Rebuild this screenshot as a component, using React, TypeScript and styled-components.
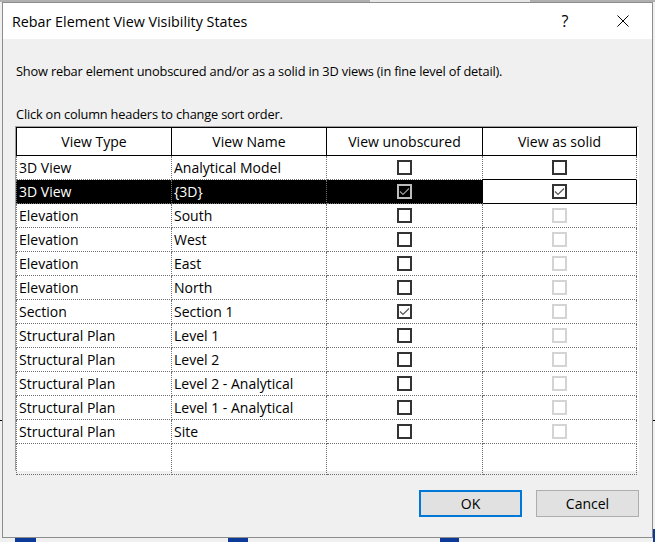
import styled, { createGlobalStyle } from 'styled-components'

const GlobalStyle = createGlobalStyle`
  html, body {
    margin: 0;
    padding: 0;
  }
  body {
    background: #f0f0f0;
    font-family: 'Open Sans', 'Noto Sans', sans-serif;
    color: #000;
  }
`

type ViewRow = {
  type: string
  name: string
  unobscured: boolean
  solid: boolean
  solidEnabled: boolean
  selected?: boolean
}

const rows: ViewRow[] = [
  { type: '3D View', name: 'Analytical Model', unobscured: false, solid: false, solidEnabled: true },
  { type: '3D View', name: '{3D}', unobscured: true, solid: true, solidEnabled: true, selected: true },
  { type: 'Elevation', name: 'South', unobscured: false, solid: false, solidEnabled: false },
  { type: 'Elevation', name: 'West', unobscured: false, solid: false, solidEnabled: false },
  { type: 'Elevation', name: 'East', unobscured: false, solid: false, solidEnabled: false },
  { type: 'Elevation', name: 'North', unobscured: false, solid: false, solidEnabled: false },
  { type: 'Section', name: 'Section 1', unobscured: true, solid: false, solidEnabled: false },
  { type: 'Structural Plan', name: 'Level 1', unobscured: false, solid: false, solidEnabled: false },
  { type: 'Structural Plan', name: 'Level 2', unobscured: false, solid: false, solidEnabled: false },
  { type: 'Structural Plan', name: 'Level 2 - Analytical', unobscured: false, solid: false, solidEnabled: false },
  { type: 'Structural Plan', name: 'Level 1 - Analytical', unobscured: false, solid: false, solidEnabled: false },
  { type: 'Structural Plan', name: 'Site', unobscured: false, solid: false, solidEnabled: false },
]

const CheckBox = ({ checked, tone }: { checked: boolean; tone: 'normal' | 'disabled' | 'inverse' }) => (
  <Box $tone={tone}>
    {checked && (
      <svg width="11" height="11" viewBox="0 0 11 11">
        <polyline
          points="1,5.5 4,8.5 10,2.5"
          fill="none"
          stroke={tone === 'inverse' ? '#9a9a9a' : '#555'}
          strokeWidth="1.2"
        />
      </svg>
    )}
  </Box>
)

const App = () => {
  return (
    <Page>
      <GlobalStyle />
      <TopStrip>
        <StripSegment $w={370} $tone="#b0b0b0" />
        <StripSegment $w={160} $tone="#e6e6e6" />
        <StripSegment $w={125} $tone="#b0b0b0" />
      </TopStrip>
      <Middle>
        <Gutter>
          <GutterLine />
        </Gutter>
        <Dialog>
          <TitleBar>
            <Title>Rebar Element View Visibility States</Title>
            <CaptionButton>?</CaptionButton>
            <CaptionButton>
              <svg width="12" height="12" viewBox="0 0 12 12">
                <path d="M0.5 0.5 L11.5 11.5 M11.5 0.5 L0.5 11.5" stroke="#000" strokeWidth="1" />
              </svg>
            </CaptionButton>
          </TitleBar>
          <Body>
            <Note>Show rebar element unobscured and/or as a solid in 3D views (in fine level of detail).</Note>
            <Hint>Click on column headers to change sort order.</Hint>
            <Frame>
              <Grid>
                <HeaderCell $first>View Type</HeaderCell>
                <HeaderCell>View Name</HeaderCell>
                <HeaderCell>View unobscured</HeaderCell>
                <HeaderCell>View as solid</HeaderCell>
                {rows.map((r, i) => (
                  <RowGroup key={i}>
                    <TextCell $first $selected={r.selected}>{r.type}</TextCell>
                    <TextCell $selected={r.selected}>{r.name}</TextCell>
                    <CheckCell $selected={r.selected}>
                      <CheckBox checked={r.unobscured} tone={r.selected ? 'inverse' : 'normal'} />
                    </CheckCell>
                    <CheckCell $focused={r.selected}>
                      <CheckBox checked={r.solid} tone={r.solidEnabled ? 'normal' : 'disabled'} />
                    </CheckCell>
                  </RowGroup>
                ))}
                <BlankCell $first />
                <BlankCell />
                <BlankCell />
                <BlankCell />
              </Grid>
            </Frame>
            <Footer>
              <Button $primary>OK</Button>
              <Button>Cancel</Button>
            </Footer>
          </Body>
        </Dialog>
        <Gutter>
          <GutterLine />
          <GutterTab />
        </Gutter>
      </Middle>
      <BottomStrip>
        <BlueTab $left={15} $w={21} />
        <BlueTab $left={192} $w={20} />
        <BlueTab $left={192} $w={19} />
        <BlueTab $left={194} $w={2} />
      </BottomStrip>
    </Page>
  )
}

export default App

const Page = styled.div`
  width: 655px;
  height: 542px;
  display: flex;
  flex-direction: column;
  overflow: hidden;
  background: #f0f0f0;
`

const TopStrip = styled.div`
  display: flex;
  height: 2px;
  flex-shrink: 0;
`

const StripSegment = styled.div<{ $w: number; $tone: string }>`
  width: ${({ $w }) => $w}px;
  background: ${({ $tone }) => $tone};
`

const Middle = styled.div`
  display: flex;
  height: 536px;
  flex-shrink: 0;
`

const Gutter = styled.div`
  width: 2px;
  flex-shrink: 0;
  display: flex;
  flex-direction: column;
  justify-content: space-between;
`

const GutterLine = styled.div`
  margin-top: 418px;
  height: 1px;
  background: #000;
`

const GutterTab = styled.div`
  height: 9px;
  background: #0b3a98;
`

const Dialog = styled.div`
  width: 651px;
  flex-shrink: 0;
  box-sizing: border-box;
  border: 1px solid #8c8c8c;
  background: #f0f0f0;
  display: flex;
  flex-direction: column;
`

const TitleBar = styled.div`
  height: 36px;
  background: #fff;
  display: flex;
  align-items: center;
  padding-left: 9px;
  flex-shrink: 0;
`

const Title = styled.div`
  flex: 1;
  font-size: 14.3px;
  line-height: 20px;
  padding-top: 1px;
`

const CaptionButton = styled.div`
  width: 58px;
  height: 36px;
  display: flex;
  align-items: center;
  justify-content: center;
  font-size: 16px;
`

const Body = styled.div`
  display: flex;
  flex-direction: column;
  padding: 0 13px 0 12px;
`

const Note = styled.div`
  margin-top: 22px;
  font-size: 12.8px;
  letter-spacing: -0.18px;
  line-height: 20px;
  padding-left: 1px;
`

const Hint = styled.div`
  margin-top: 23px;
  font-size: 12.8px;
  letter-spacing: -0.18px;
  line-height: 20px;
  padding-left: 1px;
`

const Frame = styled.div`
  margin-top: 2px;
  width: 624px;
  box-sizing: border-box;
  border-top: 1px solid #a0a0a0;
  border-left: 1px solid #a0a0a0;
  border-right: 1px solid #fff;
  border-bottom: 1px solid #fff;
  background: #fff;
  padding: 0 1px 2px 0;
`

const Grid = styled.div`
  display: grid;
  grid-template-columns: 156px 155px 156px 154px;
  grid-auto-rows: 24px;
  grid-template-rows: 29px;
  font-size: 14px;
`

const RowGroup = styled.div`
  display: contents;
`

const HeaderCell = styled.div<{ $first?: boolean }>`
  box-sizing: border-box;
  border-top: 1px solid #000;
  border-bottom: 1px solid #000;
  border-right: 1px solid #000;
  border-left: ${({ $first }) => ($first ? '1px solid #000' : 'none')};
  display: flex;
  align-items: center;
  justify-content: center;
  background: #fff;
`

const TextCell = styled.div<{ $first?: boolean; $selected?: boolean }>`
  box-sizing: border-box;
  border-right: 1px dotted #707070;
  border-bottom: 1px dotted #707070;
  border-left: ${({ $first }) => ($first ? '1px dotted #707070' : 'none')};
  background: ${({ $selected }) => ($selected ? '#000' : '#fff')};
  color: ${({ $selected }) => ($selected ? '#fff' : '#000')};
  display: flex;
  align-items: center;
  padding-left: 2px;
  white-space: nowrap;
  overflow: hidden;
`

const CheckCell = styled.div<{ $selected?: boolean; $focused?: boolean }>`
  box-sizing: border-box;
  border-right: 1px ${({ $focused }) => ($focused ? 'solid #000' : 'dotted #707070')};
  border-bottom: 1px ${({ $focused }) => ($focused ? 'solid #000' : 'dotted #707070')};
  box-shadow: ${({ $focused }) => ($focused ? '-1px -1px 0 #000' : 'none')};
  background: ${({ $selected }) => ($selected ? '#000' : '#fff')};
  display: flex;
  align-items: center;
  justify-content: center;
`

const BlankCell = styled.div<{ $first?: boolean }>`
  height: 31px;
  box-sizing: border-box;
  border-right: 1px dotted #707070;
  border-bottom: 1px dotted #707070;
  border-left: ${({ $first }) => ($first ? '1px dotted #707070' : 'none')};
`

const Box = styled.div<{ $tone: 'normal' | 'disabled' | 'inverse' }>`
  width: 15px;
  height: 15px;
  box-sizing: border-box;
  border: 2px solid
    ${({ $tone }) => ($tone === 'disabled' ? '#d4d4d4' : $tone === 'inverse' ? '#bdbdbd' : '#333')};
  background: ${({ $tone }) => ($tone === 'inverse' ? '#000' : '#fff')};
  display: flex;
  align-items: center;
  justify-content: center;
`

const Footer = styled.div`
  display: flex;
  justify-content: flex-end;
  gap: 14px;
  margin-top: 19px;
`

const Button = styled.button<{ $primary?: boolean }>`
  width: 103px;
  height: 27px;
  box-sizing: border-box;
  background: #e1e1e1;
  border: ${({ $primary }) => ($primary ? '2px solid #0078d7' : '1px solid #adadad')};
  font-family: 'Open Sans', 'Noto Sans', sans-serif;
  font-size: 14px;
  color: #000;
  padding: 0;
`

const BottomStrip = styled.div`
  display: flex;
  height: 4px;
  flex-shrink: 0;
`

const BlueTab = styled.div<{ $left: number; $w: number }>`
  margin-left: ${({ $left }) => $left}px;
  width: ${({ $w }) => $w}px;
  background: #0b3a98;
`
